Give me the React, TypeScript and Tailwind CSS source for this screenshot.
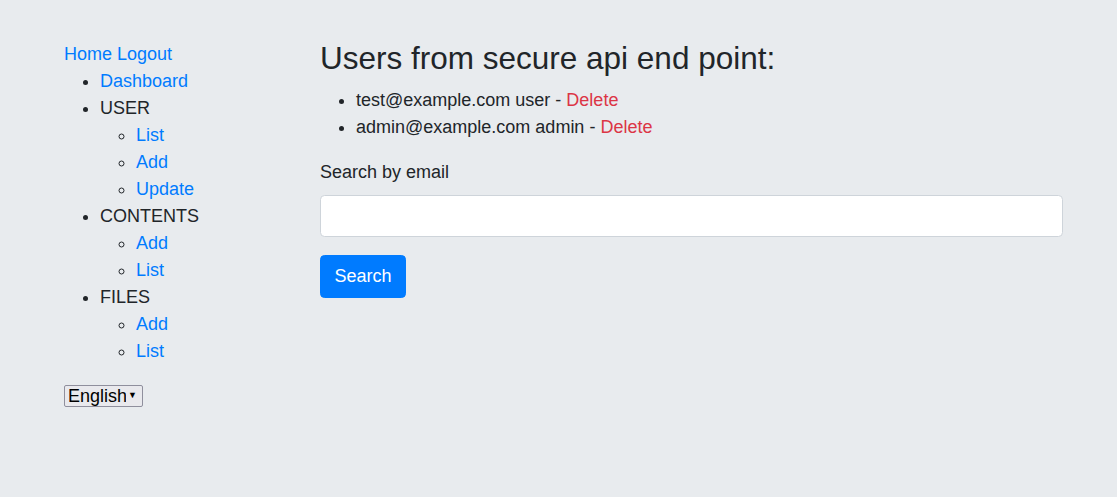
import React from "react";

const Link = ({ children, className = "" }: { children: React.ReactNode; className?: string }) => (
  <a href="#" className={`text-[#007bff] hover:underline ${className}`}>
    {children}
  </a>
);

const SubList = ({ items }: { items: string[] }) => (
  <ul className="list-[circle] pl-9">
    {items.map((it) => (
      <li key={it}>
        <Link>{it}</Link>
      </li>
    ))}
  </ul>
);

const App = () => {
  const users = [
    { email: "test@example.com", role: "user" },
    { email: "admin@example.com", role: "admin" },
  ];

  return (
    <div className="min-h-[497px] bg-[#e8ebee] text-[#212529] text-[18px] leading-[27px] font-['Liberation_Sans',Arial,sans-serif]">
      <div className="flex pt-10 pl-16 pr-[55px]">
        {/* Sidebar */}
        <div className="w-[256px] shrink-0 pt-px">
          <div>
            <Link>Home</Link> <Link>Logout</Link>
          </div>
          <ul className="list-disc pl-9">
            <li>
              <Link>Dashboard</Link>
            </li>
            <li>
              USER
              <SubList items={["List", "Add", "Update"]} />
            </li>
            <li>
              CONTENTS
              <SubList items={["Add", "List"]} />
            </li>
            <li>
              FILES
              <SubList items={["Add", "List"]} />
            </li>
          </ul>
          <div className="mt-[17px]">
            <div className="relative inline-block align-middle">
              <select className="appearance-none h-[22px] w-[79px] pl-[3px] pr-4 text-[18px] leading-[20px] text-black bg-[#e9e9ed] border border-[#8f8f9d] rounded-[2px]">
                <option>English</option>
              </select>
              <span className="pointer-events-none absolute right-[6px] top-[4px] text-[9px] leading-[16px] text-black">▼</span>
            </div>
          </div>
        </div>

        {/* Main */}
        <div className="flex-1">
          <h3 className="text-[31.5px] leading-[37.8px] font-medium mb-[9px]">Users from secure api end point:</h3>
          <ul className="list-disc pl-9 mt-[9px] mb-[18px]">
            {users.map((u) => (
              <li key={u.email}>
                {u.email} {u.role} - <a href="#" className="text-[#dc3545]">Delete</a>
              </li>
            ))}
          </ul>
          <div className="mb-[18px]">
            <label className="block mb-[9px]">Search by email</label>
            <input
              type="text"
              className="block w-[743px] h-[42px] px-3 bg-white border border-[#ced4da] rounded-[4.5px] outline-none"
            />
          </div>
          <button className="h-[43px] px-[13.5px] bg-[#007bff] text-white rounded-[4.5px] border border-[#007bff]">
            Search
          </button>
        </div>
      </div>
    </div>
  );
};

export default App;
